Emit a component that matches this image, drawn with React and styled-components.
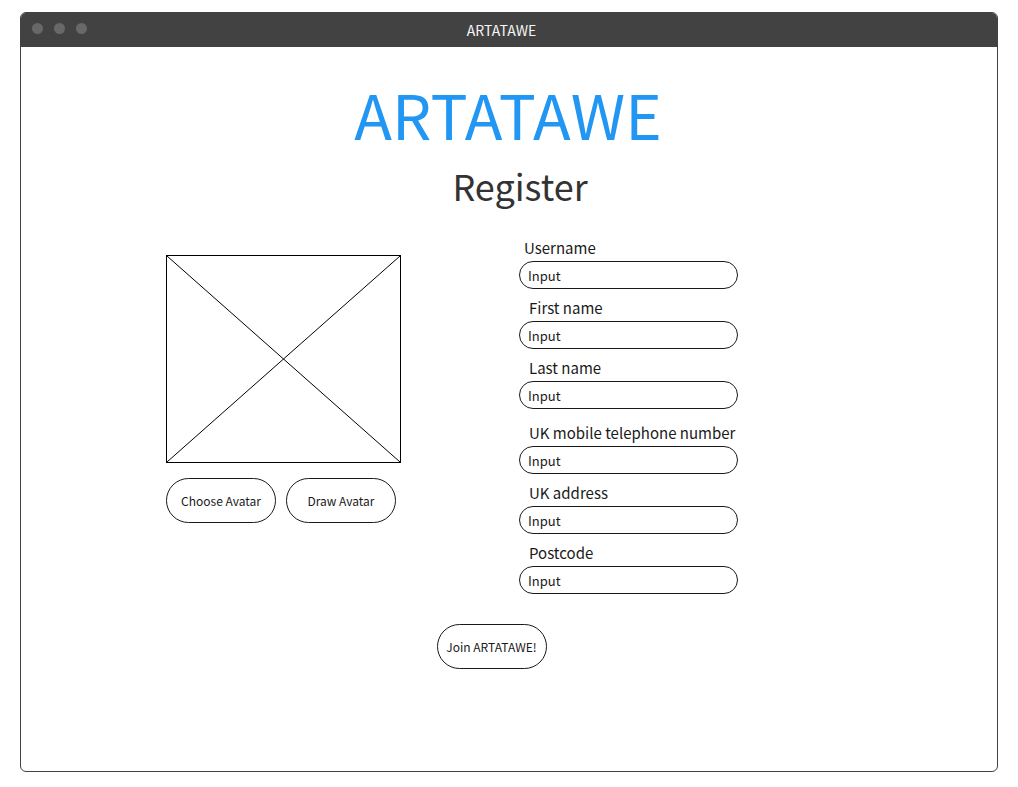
import React from "react";
import styled, { createGlobalStyle } from "styled-components";

const GlobalStyle = createGlobalStyle`
  *, *::before, *::after { box-sizing: border-box; }
  body {
    margin: 0;
    background: #fff;
    color: #1a1a1a;
    font-family: "Noto Sans CJK SC", "Noto Sans", sans-serif;
  }
  button, input { font: inherit; color: inherit; }
`;

const Page = styled.div`
  display: flex;
  min-height: 100vh;
  padding: 12px 20px 15px;
`;

const Window = styled.section`
  flex: 1;
  display: flex;
  flex-direction: column;
  border: 1px solid #424242;
  border-radius: 6px;
  overflow: hidden;
`;

const TitleBar = styled.header`
  display: grid;
  grid-template-columns: 1fr auto 1fr;
  align-items: center;
  height: 34px;
  padding: 0 26px 0 11px;
  background: #424242;
  color: #f5f5f5;
  font-size: 14px;
  line-height: 20px;
`;

const Dots = styled.div`
  display: flex;
  align-items: center;
  gap: 11px;
`;

const Dot = styled.span`
  width: 11px;
  height: 11px;
  margin-bottom: 4px;
  border-radius: 50%;
  background: #686868;
`;

const Content = styled.main`
  display: flex;
  flex-direction: column;
  align-items: center;
  padding: 26px 0 40px;
`;

const Brand = styled.h1`
  margin: 0;
  padding-right: 2px;
  color: #2196f3;
  font-size: 62px;
  font-weight: 400;
  line-height: 80px;
`;

const Heading = styled.h2`
  margin: 0;
  padding: 4px 0 0 22px;
  color: #333;
  font-size: 36px;
  font-weight: 400;
  line-height: 56px;
`;

const Form = styled.form`
  display: flex;
  flex-direction: column;
  align-items: center;
  width: 100%;
  padding-top: 24px;
`;

const Columns = styled.div`
  display: flex;
  justify-content: center;
  align-items: flex-start;
  gap: 118px;
  width: 100%;
  padding-right: 114px;
`;

const AvatarPanel = styled.div`
  display: flex;
  flex-direction: column;
  gap: 15px;
  width: 235px;
  padding-top: 18px;
`;

const AvatarPreview = styled.svg`
  display: block;
  width: 100%;
  height: 208px;
  border: 1px solid #000;
  stroke: #000;
`;

const AvatarActions = styled.div`
  display: flex;
  gap: 10px;
`;

const Button = styled.button`
  width: 110px;
  height: 45px;
  padding: 0;
  border: 1px solid #1a1a1a;
  border-radius: 23px;
  background: #fff;
  font-size: 12px;
  line-height: 18px;
`;

const Fields = styled.div`
  display: flex;
  flex-direction: column;
  gap: 13px;
`;

const FieldGroup = styled.div`
  display: flex;
  flex-direction: column;
  gap: 8px;
`;

const Field = styled.div`
  display: flex;
  flex-direction: column;
  width: 219px;
`;

const Label = styled.label`
  height: 24px;
  padding-left: ${(p) => (p.$lead ? "5px" : "10px")};
  font-size: 15px;
  line-height: 22px;
  white-space: nowrap;
`;

const Input = styled.input`
  width: 100%;
  height: 28px;
  padding: 0 8px;
  border: 1px solid #1a1a1a;
  border-radius: 14px;
  background: #fff;
  font-size: 13px;
  line-height: 20px;
`;

const Submit = styled.div`
  display: flex;
  justify-content: center;
  width: 100%;
  padding: 30px 35px 0 0;
`;

const groups = [
  [
    { id: "username", label: "Username", lead: true },
    { id: "first-name", label: "First name" },
    { id: "last-name", label: "Last name" },
  ],
  [
    { id: "mobile", label: "UK mobile telephone number" },
    { id: "address", label: "UK address" },
    { id: "postcode", label: "Postcode" },
  ],
];

export default function App() {
  return (
    <>
      <GlobalStyle />
      <Page>
        <Window>
          <TitleBar>
            <Dots>
              <Dot />
              <Dot />
              <Dot />
            </Dots>
            <span>ARTATAWE</span>
          </TitleBar>
          <Content>
            <Brand>ARTATAWE</Brand>
            <Heading>Register</Heading>
            <Form onSubmit={(e) => e.preventDefault()}>
              <Columns>
                <AvatarPanel>
                  <AvatarPreview role="img" aria-label="Avatar preview">
                    <line x1="0" y1="0" x2="100%" y2="100%" />
                    <line x1="0" y1="100%" x2="100%" y2="0" />
                  </AvatarPreview>
                  <AvatarActions>
                    <Button type="button">Choose Avatar</Button>
                    <Button type="button">Draw Avatar</Button>
                  </AvatarActions>
                </AvatarPanel>
                <Fields>
                  {groups.map((fields) => (
                    <FieldGroup key={fields[0].id}>
                      {fields.map((f) => (
                        <Field key={f.id}>
                          <Label htmlFor={f.id} $lead={f.lead}>
                            {f.label}
                          </Label>
                          <Input id={f.id} name={f.id} defaultValue="Input" />
                        </Field>
                      ))}
                    </FieldGroup>
                  ))}
                </Fields>
              </Columns>
              <Submit>
                <Button type="submit">Join ARTATAWE!</Button>
              </Submit>
            </Form>
          </Content>
        </Window>
      </Page>
    </>
  );
}
